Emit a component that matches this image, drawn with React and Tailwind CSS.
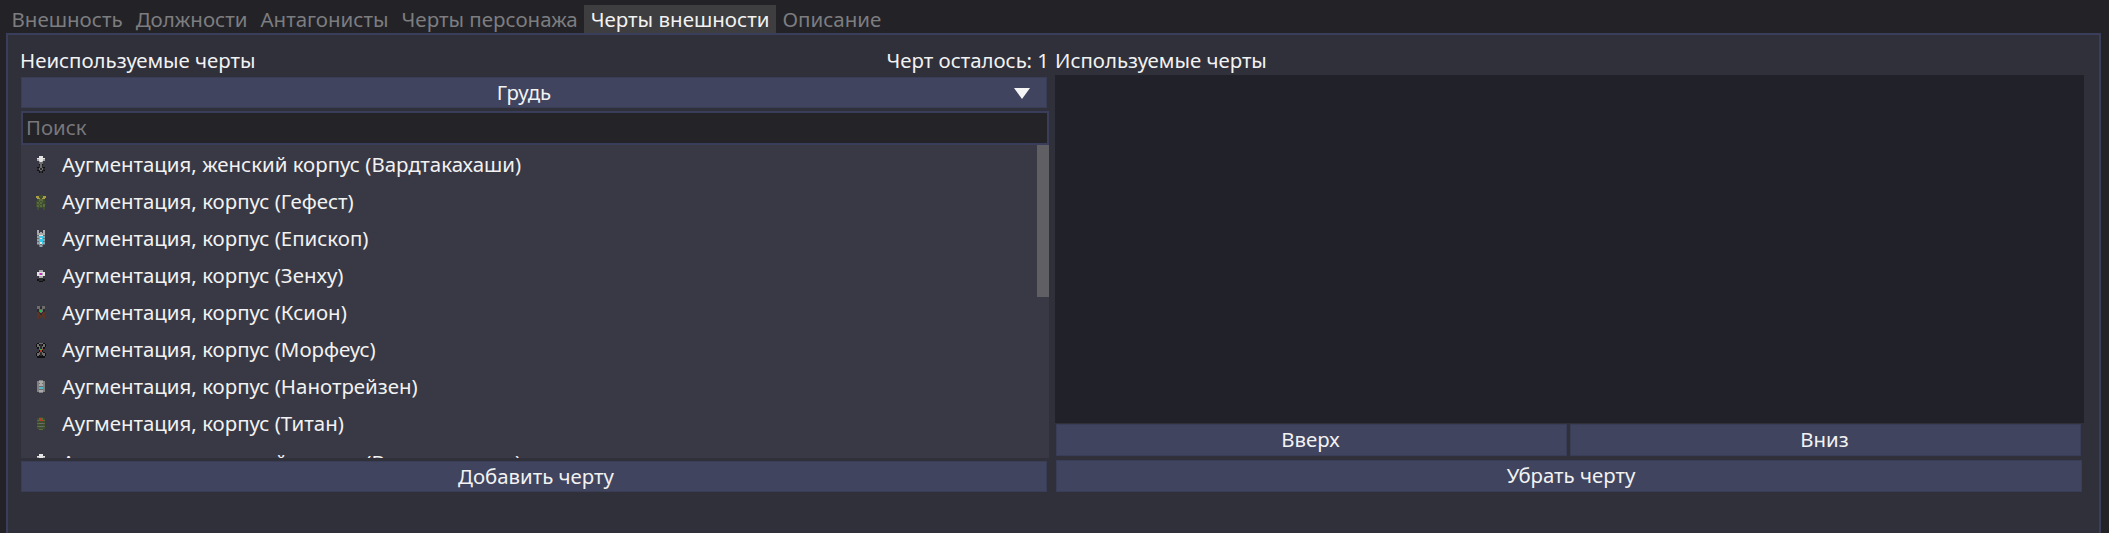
import React from 'react'

const palette = {
  w: '#e4e4e4', s: '#a9a9a9', g: '#6d6d6d', d: '#2b2b2e', k: '#111114',
  o: '#3f4d30', l: '#5a6b3e', y: '#a89c45', c: '#38c8e8', b: '#8fa3ad',
  m: '#d028c8', r: '#5c3426', n: '#22c040', R: '#b83c26', G: '#808080', t: '#50b8c8',
}

// sprites are drawn by hand, one letter is one pixel
const sprites = [
  ['...www...', '..wwwww..', '..swwws..', '...sws...', '...ggg...', '...kgk...', '...dgd...', '..kdgdk..', '..dgdgd..', '..kdgdk..', '...kdk...'],
  ['...ooo...', '.yyoooyy.', '..yyoyy..', '..olllo..', '.oololoo.', '.ololoo..', '.ooloolo.', '.ololol..', '..ooooo..', '..o...o..'],
  ['..s...s..', '..s.s.s..', '..sssss..', '..gwwwg..', '..bcccb..', '..gcwcg..', '..bcccb..', '..gcccg..', '..bcwcb..', '..gbgbg..', '...gbg...'],
  ['...sss...', '..wwwww..', '..wsmsw..', '..wwwww..', '...sss...', '...ddd...', '..kdddk..', '...kkk...'],
  ['..gg.gg..', '..ggdgg..', '..dgggd..', '..dgngd..', '..rdgdr..', '..rrdrr..', '..rrrrr..', '..r.r.r..', '..r...r..'],
  ['..kgggk..', '.kgkdkgk.', '.kggdggk.', '..kgdgk..', '...RnR...', '...kRk...', '..kgrgk..', '.kggdggk.', '.kgkdkgk.', '..kkkkk..'],
  ['...GGG...', '..GsssG..', '..GgsgG..', '..GsssG..', '..GgggG..', '..GtttG..', '..GgggG..', '..GsssG..', '...GGG...'],
  ['...ooo...', '..olRlo..', '..lRRRl..', '..ooooo..', '..lgggl..', '..ooooo..', '..lgggl..', '..ooooo..', '...lll...'],
  ['...www...', '..wwwww..', '..swwws..', '...sws...', '...ggg...', '...kgk...', '...dgd...', '..kdgdk..', '..dgdgd..', '..kdgdk..', '...kdk...'],
]

const traits = [
  'Аугментация, женский корпус (Вардтакахаши)',
  'Аугментация, корпус (Гефест)',
  'Аугментация, корпус (Епископ)',
  'Аугментация, корпус (Зенху)',
  'Аугментация, корпус (Ксион)',
  'Аугментация, корпус (Морфеус)',
  'Аугментация, корпус (Нанотрейзен)',
  'Аугментация, корпус (Титан)',
  'Аугментация, женский корпус (Вардтакахаши)',
]

const tabs = ['Внешность', 'Должности', 'Антагонисты', 'Черты персонажа', 'Черты внешности', 'Описание']

function Sprite({ rows }) {
  return (
    <svg width="14" height="18" viewBox="0 0 9 12" shapeRendering="crispEdges" className="shrink-0">
      {rows.map((row, y) =>
        row.split('').map((ch, x) =>
          palette[ch] ? <rect key={x + '-' + y} x={x} y={y + Math.floor((12 - rows.length) / 2)} width="1" height="1" fill={palette[ch]} /> : null
        )
      )}
    </svg>
  )
}

function Button({ children, className }) {
  return (
    <button className={'flex items-center justify-center bg-[#40445f] border border-[#3a3d56] text-[#f2f2f2] ' + className}>
      {children}
    </button>
  )
}

export default function App() {
  return (
    <div className="w-[2109px] h-[533px] overflow-hidden flex flex-col bg-[#232327] text-[20.4px] font-['Noto_Sans',sans-serif] text-[#f2f2f2]">
      {/* tabs */}
      <div className="h-[33px] shrink-0 pt-[5px] pl-[5px] flex text-[20.5px]">
        {tabs.map((t) => (
          <div
            key={t}
            className={
              t === 'Черты внешности'
                ? 'h-[28px] px-[6.5px] flex items-center leading-none bg-[#3e3e40] text-[#f2f2f2]'
                : 'h-[28px] px-[6.5px] flex items-center leading-none text-[#7d7d80]'
            }
          >
            {t}
          </div>
        ))}
      </div>

      {/* panel */}
      <div className="flex-1 ml-[6px] mr-[8px] border-x-2 border-t-2 border-[#3a3e5a] bg-[#30303b] pl-[13px] pr-[15px] flex gap-[6px]">
        {/* left column */}
        <div className="w-[1028px] shrink-0 flex flex-col">
          <div className="h-[42px] shrink-0 pt-[12px] -ml-[1px] flex justify-between leading-[26px]">
            <span>Неиспользуемые черты</span>
            <span>Черт осталось: 1</span>
          </div>
          <Button className="relative h-[31px] w-[1026px] shrink-0 pr-[20px] pb-[1px]">
            Грудь
            <svg width="16" height="11" viewBox="0 0 16 11" className="absolute right-[16px] top-[10px]">
              <path d="M0 0H16L8 11Z" fill="#f5f5f5" />
            </svg>
          </Button>
          <div className="mt-[3px] h-[34px] w-[1028px] shrink-0 border-2 border-[#3a3e5a] bg-[#232328] px-[3px] pb-[2px] flex items-center text-[#77777c]">
            Поиск
          </div>
          <div className="relative h-[313px] shrink-0 overflow-hidden bg-[#393945] pt-[1px] text-[20.45px]">
            {traits.map((t, i) => (
              <div
                key={i}
                className={i === 8 ? 'mt-[2px] h-[37px] pl-[13px] flex items-center gap-[14px]' : 'h-[37px] pl-[13px] flex items-center gap-[14px]'}
              >
                <Sprite rows={sprites[i]} />
                <span>{t}</span>
              </div>
            ))}
            <div className="absolute right-0 top-0 w-[12px] h-[152px] bg-[#5f5f64]"></div>
          </div>
          <Button className="mt-[3px] h-[31px] w-[1026px] shrink-0 pl-[4px] pb-[1px]">Добавить черту</Button>
        </div>

        {/* right column */}
        <div className="flex-1 flex flex-col">
          <div className="h-[40px] shrink-0 pt-[12px] leading-[26px]">Используемые черты</div>
          <div className="h-[348px] shrink-0 bg-[#21212a]"></div>
          <div className="mt-[1px] h-[32px] shrink-0 pl-[1px] pr-[3px] flex gap-[3px]">
            <Button className="flex-1 pr-[2px] pb-[1px]">Вверх</Button>
            <Button className="flex-1 pr-[2px] pb-[1px]">Вниз</Button>
          </div>
          <Button className="mt-[4px] ml-[1px] mr-[2px] h-[32px] shrink-0 pl-[4px] pb-[1px]">Убрать черту</Button>
        </div>
      </div>
    </div>
  )
}
